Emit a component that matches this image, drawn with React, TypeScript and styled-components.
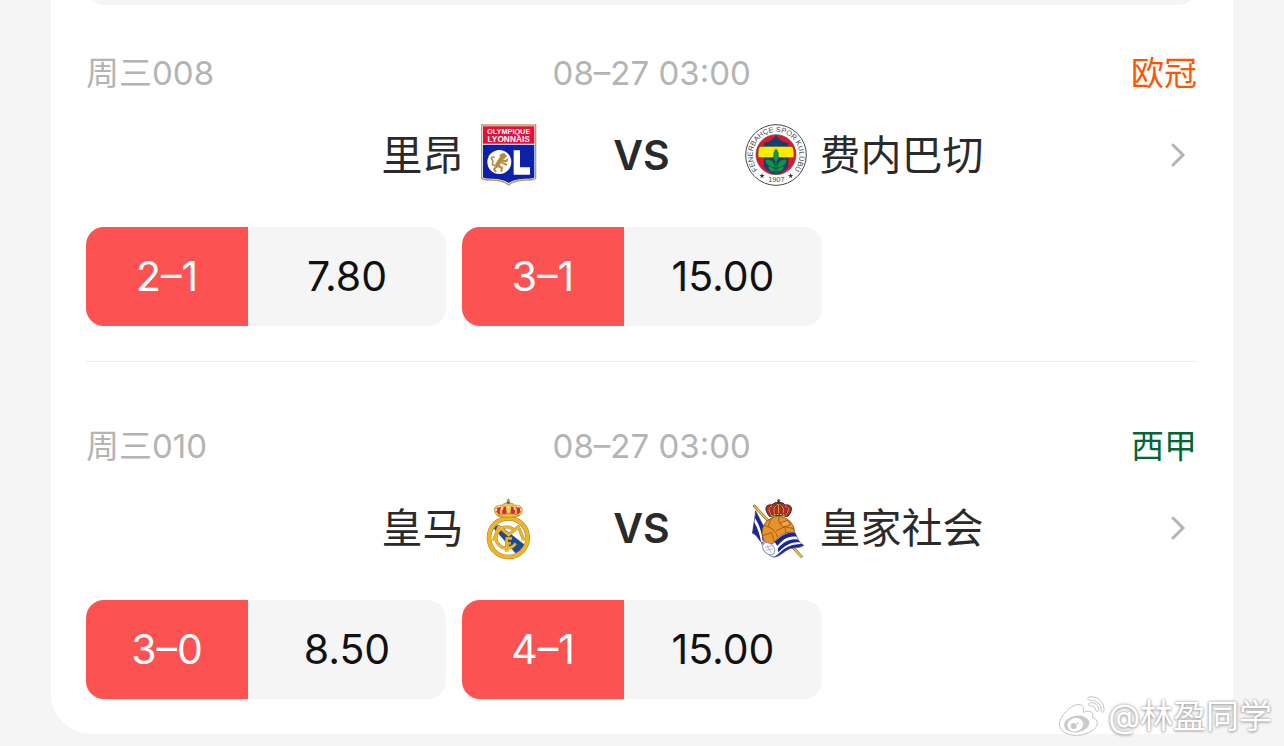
import React from "react"
import styled, { createGlobalStyle } from "styled-components";

type Score = { label: string; odds: string }

type Match = {
  id: string
  code: string
  time: string
  league: string
  leagueColor: string
  home: string
  away: string
  homeLogo: React.ReactNode
  awayLogo: React.ReactNode
  scores: Score[]
}

const LyonLogo = () => (
  <Crest viewBox="18 24 192 192" role="img" aria-label="Olympique Lyonnais">
    <path d="M33 28H199V188C199 194 190 197 176 197C150 197 130 200 116 212C102 200 82 197 56 197C42 197 33 194 33 188Z" fill="#c19a55" />
    <path d="M37 32H195V187C195 191 188 193 174 193C148 193 130 196 116 207C102 196 84 193 58 193C44 193 37 191 37 187Z" fill="#fff" />
    <path d="M39 34H193V86H39Z" fill="#e2103a" />
    <path d="M39 89H193V186C193 190 186 191 172 191C148 191 130 194 116 204C102 194 84 191 60 191C46 191 39 190 39 186Z" fill="#0b22a8" />
    <CrestText x="116" y="56" fontSize="22" fill="#fff">OLYMPIQUE</CrestText>
    <CrestText x="116" y="80" fontSize="25" fill="#fff">LYONNAIS</CrestText>
    <circle cx="88" cy="141" r="36" fill="#fff" />
    <path d="M131 106H150V157H180V179H131Z" fill="#fff" />
    <g stroke="#b98a3e" fill="none" strokeLinecap="round" strokeLinejoin="round">
      <path d="M96 127C92 136 86 141 82 150" strokeWidth="13" />
      <path d="M91 121L101 116L108 123L101 130Z" fill="#b98a3e" strokeWidth="5" />
      <path d="M96 136L108 139L112 134M97 143L109 149M85 153L96 159L94 168M80 155L72 162L77 169" strokeWidth="6" />
      <path d="M75 152C60 151 73 140 67 135C61 131 66 124 72 127" strokeWidth="5" />
    </g>
  </Crest>
)

const FenerbahceLogo = () => (
  <Crest viewBox="24 24 192 192" role="img" aria-label="Fenerbahçe">
    <defs>
      <clipPath id="fb-core"><circle cx="120" cy="119" r="54" /></clipPath>
      <path id="fb-top" d="M70 170A70 70 0 1 1 170 170" />
    </defs>
    <circle cx="120" cy="120" r="91" fill="#fff" stroke="#454a50" strokeWidth="3" />
    <circle cx="120" cy="119" r="60" fill="#e4142c" stroke="#454a50" strokeWidth="2" />
    <path d="M120 62C131 77 145 81 157 84V152C151 166 135 174 120 178C105 174 89 166 83 152V84C95 81 109 77 120 62Z" fill="#153f70" />
    <path d="M66 94H174V128H66Z" fill="#ffea00" stroke="#153f70" strokeWidth="2" clipPath="url(#fb-core)" />
    <g fill="#159447" stroke="#0a6b34" strokeWidth="1">
      <path d="M120 101C132 115 129 130 120 143C111 130 108 115 120 101Z" />
      <path d="M88 135C103 130 114 141 118 157C101 158 91 149 88 135Z" />
      <path d="M152 135C137 130 126 141 122 157C139 158 149 149 152 135Z" />
      <path d="M96 156C108 153 116 160 118 169C107 171 99 167 96 156Z" />
      <path d="M144 156C132 153 124 160 122 169C133 171 141 167 144 156Z" />
      <path d="M118 137H122V176H118Z" />
    </g>
    <RingText fontSize="22">
      <textPath href="#fb-top" startOffset="50%" textAnchor="middle">FENERBAHÇE SPOR KULÜBÜ</textPath>
    </RingText>
    <CrestText x="121" y="202" fontSize="22" fill="#454a50" $light>1907</CrestText>
    <path d="M78 174L80 180L86 180L81 184L83 190L78 186L73 190L75 184L70 180L76 180Z" fill="#333" />
    <path d="M164 174L166 180L172 180L167 184L169 190L164 186L159 190L161 184L156 180L162 180Z" fill="#333" />
  </Crest>
)

const MadridLogo = () => (
  <Crest viewBox="18 18 192 192" role="img" aria-label="Real Madrid">
    <defs>
      <clipPath id="rm-core"><circle cx="115" cy="143" r="53" /></clipPath>
    </defs>
    <circle cx="115" cy="143" r="58" fill="#fff" />
    <path d="M68 112L86 104L164 164L142 196Z" fill="#1d4b93" clipPath="url(#rm-core)" />
    <circle cx="115" cy="143" r="58" fill="none" stroke="#8d8660" strokeWidth="14" />
    <circle cx="115" cy="143" r="58" fill="none" stroke="#f4b41f" strokeWidth="11" />
    <g fill="none" strokeLinejoin="round">
      <g stroke="#8d8660" strokeWidth="9">
        <path d="M72 149L86 110L116 135L145 110L161 149" />
        <path d="M136 124A32 32 0 1 0 137 160" />
        <path d="M110 182V145H126M110 160H122" />
      </g>
      <g stroke="#f4b41f" strokeWidth="7">
        <path d="M66 149H78M72 149L86 110L116 135L145 110L161 149M154 149H167" />
        <path d="M136 124A32 32 0 1 0 137 160" />
        <path d="M110 182V145H126M110 160H122M104 182H116" />
      </g>
    </g>
    <path d="M83 78C62 58 78 43 96 46C103 36 127 36 134 46C152 43 168 58 147 78C130 83 101 83 83 78Z" fill="#f5c242" stroke="#977131" strokeWidth="2" />
    <path d="M86 72C72 59 80 50 94 52C88 61 89 66 91 73ZM98 72C93 61 99 51 107 49L110 71ZM121 71L124 49C132 51 138 61 133 72ZM140 73C142 66 143 61 137 52C151 50 159 59 145 72Z" fill="#df2344" />
    <g fill="#fff0bc">
      <circle cx="79" cy="59" r="3" /><circle cx="87" cy="49" r="3" /><circle cx="97" cy="56" r="3" />
      <circle cx="115" cy="52" r="3" /><circle cx="115" cy="62" r="3" /><circle cx="134" cy="56" r="3" />
      <circle cx="144" cy="49" r="3" /><circle cx="153" cy="59" r="3" />
    </g>
    <path d="M85 76C103 70 128 70 146 76" fill="none" stroke="#986f2e" strokeWidth="3" strokeDasharray="5 3" />
    <circle cx="115" cy="37" r="5" fill="#346db2" />
    <path d="M115 26V36M110 30H120" stroke="#b88421" strokeWidth="3" />
  </Crest>
)

const SociedadLogo = () => (
  <Crest viewBox="24 18 192 192" role="img" aria-label="Real Sociedad">
    <path d="M55 48L196 199" stroke="#65501b" strokeWidth="8" strokeLinecap="round" />
    <path d="M55 48L196 199" stroke="#efc544" strokeWidth="5" strokeLinecap="round" />
    <path d="M59 62C56 86 53 108 49 130C66 136 67 152 80 160L90 122C78 100 69 82 59 62Z" fill="#fff" stroke="#24295a" strokeWidth="2" />
    <path d="M59 64L57 84C70 105 78 126 80 154L90 122C78 100 68 82 59 64ZM54 96L50 129C63 134 66 147 75 156C72 134 64 112 54 96Z" fill="#1b2593" />
    <circle cx="127" cy="128" r="49" fill="#e8922b" stroke="#6f4218" strokeWidth="2" />
    <path d="M83 107C103 110 119 120 125 142M79 137L107 128L116 160M112 82C102 88 100 98 97 108M130 80C124 94 131 104 148 111L175 116M121 122L146 110L150 128" fill="none" stroke="#794719" strokeWidth="2" />
    <path d="M132 99L155 91L163 104L142 111Z" fill="#f3a43e" stroke="#794719" strokeWidth="2" />
    <path d="M76 158C94 165 111 166 123 148C140 129 160 122 178 130C185 145 189 159 203 166C190 176 173 171 159 177C141 186 130 203 111 201C94 195 85 178 76 158Z" fill="#fff" stroke="#24295a" strokeWidth="2" />
    <path d="M116 156C140 131 160 124 178 130L182 140C158 136 140 148 124 168ZM125 176C143 155 163 144 186 149L191 157C166 154 148 165 127 187ZM123 195C146 173 164 162 197 162L203 166C187 176 173 170 157 178C138 188 132 199 112 201Z" fill="#1b2593" />
    <ellipse cx="98" cy="176" rx="15" ry="21" transform="rotate(-45 98 176)" fill="#fff" stroke="#8c95cb" strokeWidth="3" />
    <path d="M87 172L107 168M90 181L110 176M93 167L106 188" fill="none" stroke="#8c95cb" strokeWidth="2" />
    <path d="M101 80C82 57 89 42 108 45C115 34 141 34 148 45C168 42 174 58 155 80C140 75 117 75 101 80Z" fill="#c91f35" stroke="#3c2322" strokeWidth="3" />
    <path d="M105 74C96 58 97 50 109 48M116 72C110 57 117 49 126 42M140 72C146 57 139 49 130 42M151 74C160 58 159 50 147 48M128 42V72" fill="none" stroke="#3c2322" strokeWidth="5" />
    <path d="M105 74C96 58 97 50 109 48M116 72C110 57 117 49 126 42M140 72C146 57 139 49 130 42M151 74C160 58 159 50 147 48M128 42V72" fill="none" stroke="#eebc31" strokeWidth="3" />
    <path d="M101 78C118 71 138 71 155 78" fill="none" stroke="#7a401c" strokeWidth="7" />
    <path d="M105 77C119 72 137 72 151 77" fill="none" stroke="#f2c84d" strokeWidth="3" strokeDasharray="5 4" />
    <circle cx="128" cy="38" r="5" fill="#332e52" />
    <path d="M128 27V37M123 31H133" stroke="#4d3d36" strokeWidth="3" />
  </Crest>
)

const Chevron = () => (
  <ChevronIcon viewBox="0 0 16 26" aria-hidden="true">
    <path d="M3 3L13 13L3 23" fill="none" stroke="#b4b4b4" strokeWidth="3" strokeLinecap="round" strokeLinejoin="miter" />
  </ChevronIcon>
)

const matches: Match[] = [
  {
    id: "008",
    code: "周三008",
    time: "08–27 03:00",
    league: "欧冠",
    leagueColor: "#ff5500",
    home: "里昂",
    away: "费内巴切",
    homeLogo: <LyonLogo />,
    awayLogo: <FenerbahceLogo />,
    scores: [{ label: "2–1", odds: "7.80" }, { label: "3–1", odds: "15.00" }],
  },
  {
    id: "010",
    code: "周三010",
    time: "08–27 03:00",
    league: "西甲",
    leagueColor: "#006633",
    home: "皇马",
    away: "皇家社会",
    homeLogo: <MadridLogo />,
    awayLogo: <SociedadLogo />,
    scores: [{ label: "3–0", odds: "8.50" }, { label: "4–1", odds: "15.00" }],
  },
]

const App: React.FC = () => (
  <>
    <GlobalStyle />
    <Page>
      <Card>
        <PreviousOdds />
        {matches.map(match => (
          <MatchItem key={match.id}>
            <Meta>
              <span>{match.code}</span>
              <time>{match.time}</time>
              <League $color={match.leagueColor}>{match.league}</League>
            </Meta>
            <Teams href={`#match-${match.id}`}>
              <Side $end>
                <span>{match.home}</span>
                {match.homeLogo}
              </Side>
              <Versus>VS</Versus>
              <Side>
                {match.awayLogo}
                <span>{match.away}</span>
                <Chevron />
              </Side>
            </Teams>
            <OddsRow>
              {match.scores.map(score => (
                <OddsButton key={score.label} type="button">
                  <ScoreLabel>{score.label}</ScoreLabel>
                  <OddsValue>{score.odds}</OddsValue>
                </OddsButton>
              ))}
            </OddsRow>
          </MatchItem>
        ))}
      </Card>
      <Watermark>
        <WeiboIcon viewBox="50 36 144 126" aria-hidden="true">
          <g fill="#fff" stroke="#c4c4c4" strokeWidth="3" strokeLinejoin="round">
            <path d="M107 65C86 69 54 99 54 125C55 147 83 158 108 157C139 156 167 139 168 121C168 110 161 106 153 103C159 88 147 80 126 88C128 75 126 62 107 65Z" />
            <path d="M143 42C169 38 190 57 188 83C187 90 178 89 179 82C181 64 166 50 146 52C139 52 137 44 143 42Z" />
            <path d="M146 59C161 57 173 68 172 81C170 88 162 86 163 80C163 73 156 68 148 69C141 69 140 61 146 59Z" />
          </g>
          <ellipse cx="106" cy="123" rx="38" ry="25" transform="rotate(-8 106 123)" fill="#cbcbcb" />
          <ellipse cx="102" cy="125" rx="24" ry="20" transform="rotate(-15 102 125)" fill="#fff" />
          <circle cx="97" cy="129" r="9" fill="#c8c8c8" />
          <circle cx="109" cy="121" r="3" fill="#c8c8c8" />
        </WeiboIcon>
        <span>@林盈同学</span>
      </Watermark>
    </Page>
  </>
);

export default App;


const GlobalStyle = createGlobalStyle`
  * {
    box-sizing: border-box;
  }

  body {
    margin: 0;
    background: #f5f5f5;
    font-family: Inter, "Noto Sans CJK SC", sans-serif;
  }
`

const Page = styled.main`
  position: relative;
  padding: 0 51px 12px;
`

const Card = styled.div`
  display: flow-root;
  padding: 0 36px 0 35px;
  border-radius: 0 0 40px 40px;
  background: #fff;
`

/* mostly scrolled off, only its bottom edge shows */
const PreviousOdds = styled.div`
  height: 99px;
  margin-top: -94px;
  border-radius: 18px;
  background: #f5f5f5;
`

const MatchItem = styled.section`
  padding: 62px 0 35px;

  &:nth-child(2) {
    padding-top: 46px;
  }

  & + & {
    border-top: 1px solid #ededed;
  }
`

const Meta = styled.div`
  display: grid;
  grid-template-columns: 42% 1fr auto;
  color: #b4b4b4;
  font-size: 33px;
  line-height: 45px;
`

const League = styled.span<{ $color: string }>`
  color: ${props => props.$color};
`

const Teams = styled.a`
  display: grid;
  grid-template-columns: 1fr 204px 1fr;
  align-items: center;
  margin-top: 27px;
  color: #2a2a2a;
  text-decoration: none;
`

const Side = styled.div<{ $end?: boolean }>`
  display: flex;
  align-items: center;
  justify-content: ${props => props.$end ? "flex-end" : "flex-start"};
  gap: 12px;
  font-size: 41px;
  line-height: 64px;
`

const Versus = styled.span`
  font-size: 41px;
  font-weight: 600;
  text-align: center;
`

const Crest = styled.svg`
  flex: none;
  width: 64px;
  height: 64px;
`

const CrestText = styled.text<{ $light?: boolean }>`
  font-family: "Liberation Sans", sans-serif;
  font-weight: ${props => props.$light ? 400 : 700};
  text-anchor: middle;
`

const RingText = styled.text`
  fill: #454a50;
  font-family: "Liberation Sans", sans-serif;
`

const ChevronIcon = styled.svg`
  width: 16px;
  height: 26px;
  margin-left: auto;
  margin-right: 11px;
`

const OddsRow = styled.div`
  display: flex;
  gap: 16px;
  margin-top: 40px;
`

const OddsButton = styled.button`
  display: flex;
  width: 360px;
  padding: 0;
  overflow: hidden;
  border: 0;
  border-radius: 18px;
  background: #f5f5f5;
  color: #111;
  font-family: inherit;
  font-size: 41px;
  line-height: 99px;
  cursor: pointer;
`

const ScoreLabel = styled.span`
  width: 45%;
  background: #fc5252;
  color: #fff;
`

const OddsValue = styled.span`
  flex: 1;
`

const Watermark = styled.div`
  position: absolute;
  right: 12px;
  bottom: 8px;
  display: flex;
  align-items: center;
  gap: 2px;
  color: #fff;
  font-size: 33px;
  line-height: 44px;
  text-shadow: 0 0 3px #999, 0 1px 3px #aaa;
`

const WeiboIcon = styled.svg`
  width: 48px;
  height: 42px;
`
